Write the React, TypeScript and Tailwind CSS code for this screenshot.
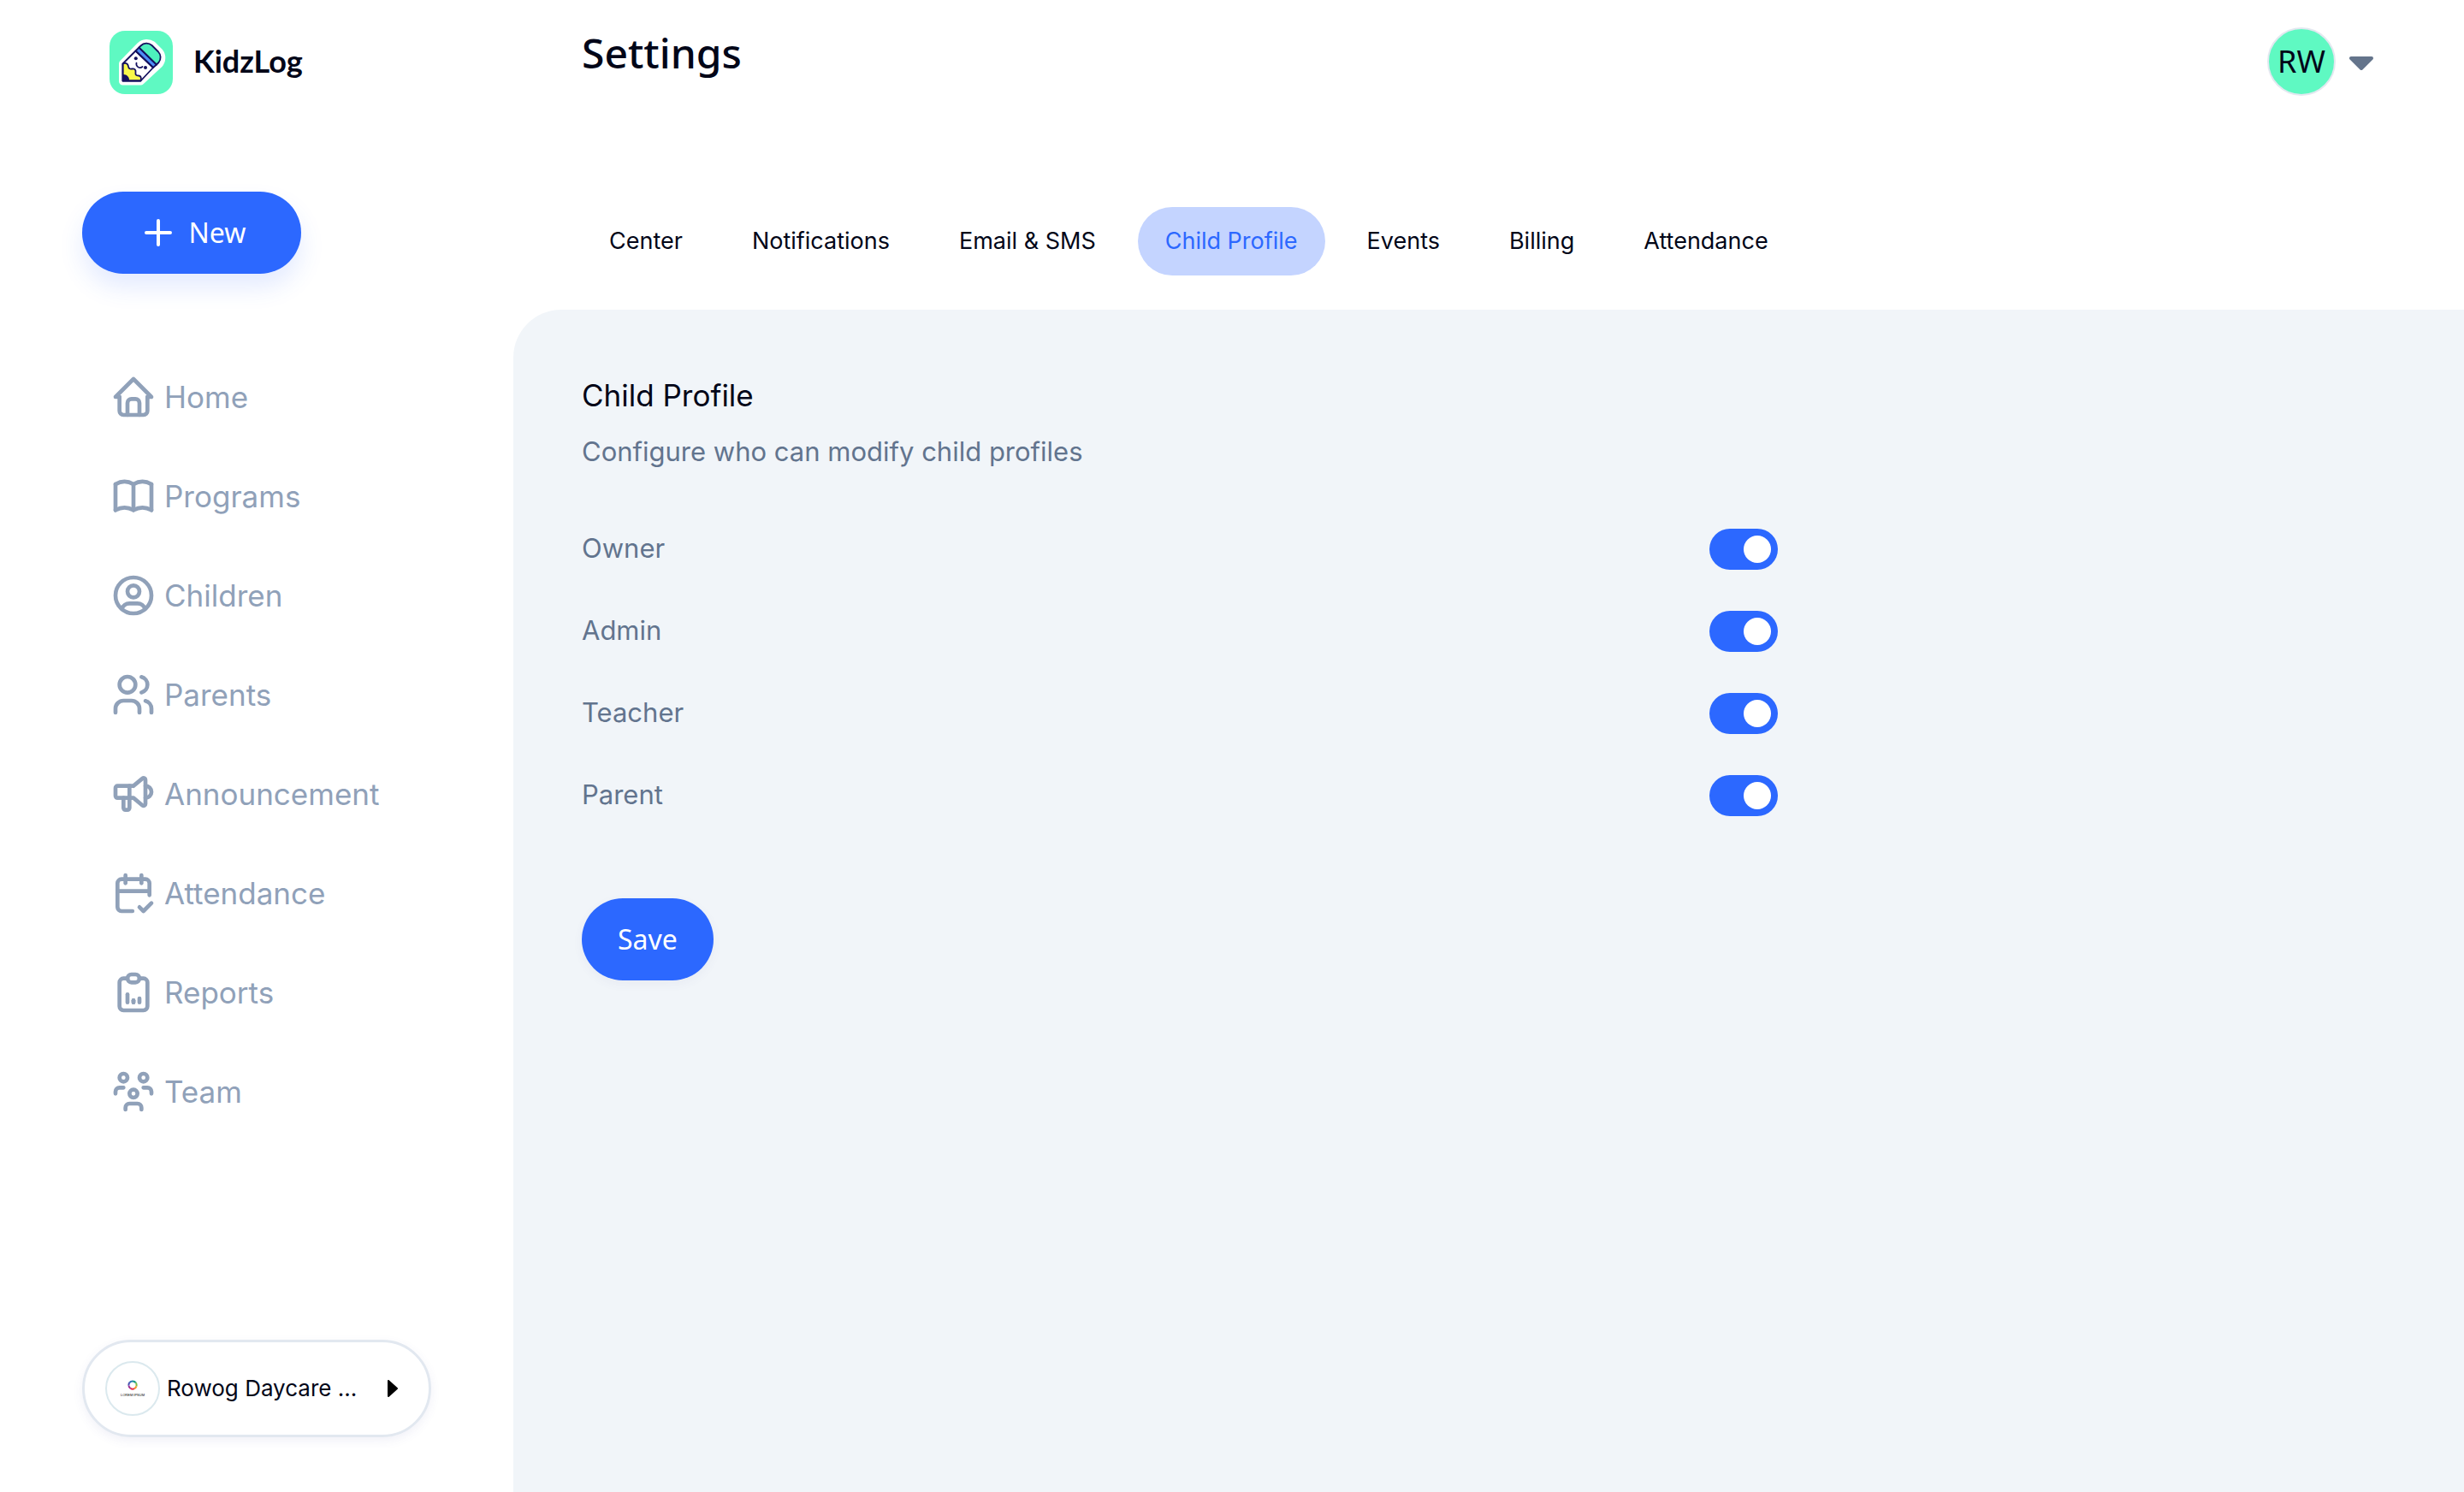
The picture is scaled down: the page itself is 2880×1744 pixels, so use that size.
import { useState } from "react";
import type { IconType } from "react-icons";
import {
  TbBook,
  TbCalendarCheck,
  TbClipboardData,
  TbHome,
  TbSpeakerphone,
  TbUserCircle,
  TbUsers,
  TbUsersGroup,
} from "react-icons/tb";

const navItems: { label: string; icon: IconType }[] = [
  { label: "Home", icon: TbHome },
  { label: "Programs", icon: TbBook },
  { label: "Children", icon: TbUserCircle },
  { label: "Parents", icon: TbUsers },
  { label: "Announcement", icon: TbSpeakerphone },
  { label: "Attendance", icon: TbCalendarCheck },
  { label: "Reports", icon: TbClipboardData },
  { label: "Team", icon: TbUsersGroup },
];

const tabs = ["Center", "Notifications", "Email & SMS", "Child Profile", "Events", "Billing", "Attendance"];

const roles = ["Owner", "Admin", "Teacher", "Parent"];

function PencilLogo() {
  return (
    <svg viewBox="0 0 74 74" className="size-[74px] shrink-0" aria-hidden="true">
      <rect width="74" height="74" rx="18" fill="#5ff9c2" />
      <path
        d="M15.500 38.500 36 17.500a11 11 0 0 1 14-1l8.500 8.500a11 11 0 0 1-.5 14L36.500 59H15.500Z"
        fill="#fff"
        stroke="#fff"
        strokeWidth="9"
        strokeLinejoin="round"
      />
      <path d="M15.500 38.500 30.500 23.500 51 43 36.500 58.500H15.500Z" fill="#fff" />
      <path
        d="M15.500 38.500c3-1.500 6-.5 6.500 3 .5 3 2 3.500 4.500 3s4.500 1 4 4 1 4 3.500 4 3.500 2.500 2.500 6h-21Z"
        fill="#f8f749"
        stroke="#14105e"
        strokeWidth="1.800"
        strokeLinejoin="round"
      />
      <path d="M15.500 51c4.500-.5 8 3 7.500 7.500h-7.500Z" fill="#14105e" />
      <path d="m30.500 23.500 4-4L55 39.500 51 43Z" fill="#4d8cf5" stroke="#14105e" strokeWidth="1.800" strokeLinejoin="round" />
      <path
        d="m34.500 19.500 2-2a9.500 9.500 0 0 1 13-.5l7.500 7.500a9.500 9.500 0 0 1 .5 12.500L55 39.500Z"
        fill="#4df0bd"
        stroke="#14105e"
        strokeWidth="1.800"
        strokeLinejoin="round"
      />
      <path d="M15.500 38.500 30.500 23.500 51 43 36.500 58.500H15.500Z" fill="none" stroke="#14105e" strokeWidth="1.800" strokeLinejoin="round" />
      <circle cx="30.800" cy="32.300" r="2" fill="#14105e" />
      <circle cx="42" cy="43" r="2" fill="#14105e" />
      <path d="M31.500 37.500c-1 4 3.500 7.500 7 4.500" fill="none" stroke="#14105e" strokeWidth="1.700" strokeLinecap="round" />
    </svg>
  );
}

function CenterLogo() {
  return (
    <span className="flex size-16 shrink-0 flex-col items-center justify-center gap-[3px] rounded-full border-2 border-[#dbe9ee] bg-white">
      <svg viewBox="0 0 12 12" className="size-3" aria-hidden="true">
        <g fill="none" strokeWidth="2">
          <path d="M2.500 3A4.600 4.600 0 0 1 6 1.400" stroke="#2878b8" />
          <path d="M6 1.400A4.600 4.600 0 0 1 9.800 3.400" stroke="#189a86" />
          <path d="M9.800 3.400A4.600 4.600 0 0 1 10.400 7.400" stroke="#7cc04a" />
          <path d="M10.400 7.400A4.600 4.600 0 0 1 8 10.200" stroke="#f4962c" />
          <path d="M8 10.200A4.600 4.600 0 0 1 3.600 9.900" stroke="#e8304a" />
          <path d="M3.600 9.900A4.600 4.600 0 0 1 1.400 6.500" stroke="#a02a90" />
          <path d="M1.400 6.500A4.600 4.600 0 0 1 2.500 3" stroke="#4a50b0" />
        </g>
      </svg>
      <span className="font-['Liberation_Sans'] text-[4px] leading-[5px] text-black">LOREM IPSUM</span>
    </span>
  );
}

function Sidebar() {
  return (
    <aside className="flex w-[600px] shrink-0 flex-col items-start px-24 pt-9 pb-16">
      <a href="#home" className="ml-8 flex items-center gap-6">
        <PencilLogo />
        <span className="pb-1 font-[Lato] text-4xl leading-[48px] font-bold">KidzLog</span>
      </a>

      <button
        type="button"
        className="mt-[114px] flex h-24 w-64 items-center justify-center gap-5 rounded-full bg-[#2c68ff] pl-2 font-['Noto_Sans'] text-[32px] text-white shadow-[0_16px_28px_rgba(44,104,255,0.13)]"
      >
        <svg viewBox="0 0 32 32" className="size-8" aria-hidden="true">
          <path d="M16 2v28M2 16h28" stroke="currentColor" strokeWidth="4" strokeLinecap="round" />
        </svg>
        New
      </button>

      <nav className="mt-[116px] ml-8 flex flex-col gap-[60px]">
        {navItems.map(({ label, icon: Icon }) => (
          <a key={label} href={`#${label.toLowerCase()}`} className="flex items-center gap-2 text-[35px] leading-[56px] text-slate-400">
            <Icon className="size-14" />
            {label}
          </a>
        ))}
      </nav>

      <button
        type="button"
        className="mt-auto flex h-[114px] w-[408px] items-center rounded-full border-[3px] border-slate-200 pr-9 pl-6 text-left shadow-[0_4px_12px_rgba(80,80,160,0.08)]"
      >
        <CenterLogo />
        <span className="ml-2 text-[26px] leading-9 whitespace-nowrap">Rowog Daycare ...</span>
        <svg viewBox="0 0 12 20" className="ml-auto h-5 w-3" aria-hidden="true">
          <path d="M1 1v18l10-9Z" fill="#000" stroke="#000" strokeWidth="2" strokeLinejoin="round" />
        </svg>
      </button>
    </aside>
  );
}

function Header() {
  return (
    <header className="flex h-[242px] items-start justify-between pt-8 pr-[106px] pl-20">
      <h1 className="font-['Noto_Sans'] text-5xl leading-[60px] font-medium">Settings</h1>
      <button type="button" aria-label="Account menu" className="flex items-center gap-4">
        <span className="flex size-20 items-center justify-center rounded-full border-2 border-slate-200 bg-[#5ff9c2] font-['Noto_Sans'] text-4xl">
          RW
        </span>
        <svg viewBox="0 0 28 16" className="mt-1 h-4 w-7" aria-hidden="true">
          <path d="M2 2h24L14 14Z" fill="#64748b" stroke="#64748b" strokeWidth="4" strokeLinejoin="round" />
        </svg>
      </button>
    </header>
  );
}

export default function App() {
  const [activeTab, setActiveTab] = useState("Child Profile");

  return (
    <div className="flex min-h-screen bg-white font-[Inter,sans-serif] text-slate-950">
      <Sidebar />
      <div className="flex min-w-0 flex-1 flex-col">
        <Header />
        <nav className="flex gap-[17px] pl-20">
          {tabs.map((tab) => (
            <button
              key={tab}
              type="button"
              onClick={() => setActiveTab(tab)}
              className={
                tab === activeTab
                  ? "h-20 rounded-full bg-[#c4d4ff] px-8 text-[27px] whitespace-nowrap text-[#2c68ff]"
                  : "h-20 rounded-full px-8 text-[27px] whitespace-nowrap"
              }
            >
              {tab}
            </button>
          ))}
        </nav>

        <main className="mt-10 flex-1 rounded-tl-[56px] bg-slate-100 px-20 pt-[76px]">
          <h2 className="text-[35px] leading-[48px]">Child Profile</h2>
          <p className="mt-[18px] text-[31px] leading-[48px] text-slate-500">Configure who can modify child profiles</p>
          <form className="mt-[66px] max-w-[1398px]" onSubmit={(event) => event.preventDefault()}>
            <div className="flex flex-col gap-12">
              {roles.map((role) => (
                <label key={role} className="flex h-12 items-center justify-between text-[31px] leading-[44px] text-slate-500">
                  <span className="pb-0.5">{role}</span>
                  <input
                    type="checkbox"
                    role="switch"
                    defaultChecked
                    className="flex h-12 w-20 cursor-pointer appearance-none items-center rounded-full bg-slate-300 px-2 before:size-8 before:rounded-full before:bg-white checked:justify-end checked:bg-[#2c68ff]"
                  />
                </label>
              ))}
            </div>
            <button
              type="submit"
              className="mt-24 h-24 rounded-full bg-[#2c68ff] px-[42px] font-['Noto_Sans'] text-[32px] text-white shadow-[0_4px_12px_rgba(80,80,160,0.06)]"
            >
              Save
            </button>
          </form>
        </main>
      </div>
    </div>
  );
}
